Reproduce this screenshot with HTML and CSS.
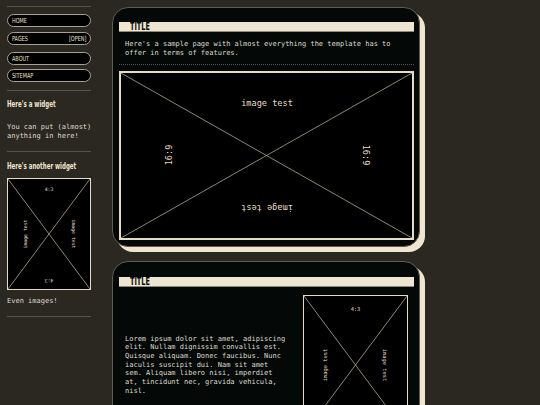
FILE: index.html
```html
<!DOCTYPE html>
<html>
<head>
<meta charset="utf-8">
<link rel="stylesheet" href="styles.css">
</head>
<body>
<div class="page">
  <aside class="sidebar">
    <hr class="rule rule-top">
    <nav class="nav">
      <a class="pill"><span class="cond">HOME</span></a>
      <a class="pill pill-split"><span class="cond">PAGES</span><span class="cond cond-right">[OPEN]</span></a>
      <a class="pill pill-gap"><span class="cond">ABOUT</span></a>
      <a class="pill pill-last"><span class="cond">SITEMAP</span></a>
    </nav>
    <hr class="rule">
    <h3 class="widget-title">Here's a widget</h3>
    <p class="widget-text">You can put (almost) anything in here!</p>
    <hr class="rule">
    <h3 class="widget-title widget-title-2">Here's another widget</h3>
    <div class="ph ph-side">
      <svg class="ph-svg" width="82" height="110" viewBox="0 0 82 110">
        <line x1="0" y1="0" x2="82" y2="110"/>
        <line x1="82" y1="0" x2="0" y2="110"/>
        <text class="t5" x="41" y="10">4:3</text>
        <text class="t5" transform="translate(17 55) rotate(-90)">image test</text>
        <text class="t5" transform="translate(65 55) rotate(90)">image test</text>
        <text class="t5" transform="translate(41 101) rotate(180)">4:3</text>
      </svg>
    </div>
    <p class="widget-text widget-text-2">Even images!</p>
    <hr class="rule">
  </aside>

  <main class="main">
    <section class="card card-first">
      <h2 class="card-title"><span class="title-text">TITLE</span></h2>
      <p class="card-text">Here's a sample page with almost everything the template has to offer in terms of features.</p>
      <hr class="dots">
      <div class="ph ph-wide">
        <svg class="ph-svg" width="291" height="165" viewBox="0 0 291 165">
          <line x1="0" y1="0" x2="291" y2="165"/>
          <line x1="291" y1="0" x2="0" y2="165"/>
          <text class="t9" x="146" y="30">image test</text>
          <text class="t9" transform="translate(48 82) rotate(-90)">16:9</text>
          <text class="t9" transform="translate(245 82) rotate(90)">16:9</text>
          <text class="t9" transform="translate(146 135) rotate(180)">image test</text>
        </svg>
      </div>
    </section>

    <section class="card">
      <h2 class="card-title"><span class="title-text">TITLE</span></h2>
      <div class="split">
        <p class="card-text split-text">Lorem ipsum dolor sit amet, adipiscing elit. Nullam dignissim convallis est. Quisque aliquam. Donec faucibus. Nunc iaculis suscipit dui. Nam sit amet sem. Aliquam libero nisi, imperdiet at, tincidunt nec, gravida vehicula, nisl.</p>
        <div class="ph ph-tall">
          <svg class="ph-svg" width="103" height="138" viewBox="0 0 103 138">
            <line x1="0" y1="0" x2="103" y2="138"/>
            <line x1="103" y1="0" x2="0" y2="138"/>
            <text class="t55" x="51.5" y="13">4:3</text>
            <text class="t55" transform="translate(21 69) rotate(-90)">image test</text>
            <text class="t55" transform="translate(81 69) rotate(90)">image test</text>
            <text class="t55" transform="translate(51.5 126) rotate(180)">4:3</text>
          </svg>
        </div>
      </div>
    </section>
  </main>
</div>
</body>
</html>
```

FILE: styles.css
```css
html, body {
  margin: 0;
  padding: 0;
  background: #2b2721;
  height: 100%;
  overflow: hidden;
}

.page {
  display: flex;
  align-items: flex-start;
  padding-left: 7px;
}

/* ---------- sidebar ---------- */
.sidebar {
  width: 84px;
  flex: none;
  padding-top: 6px;
  color: #e9e0cb;
}

.rule {
  border: 0;
  border-top: 1px solid #58534a;
  margin: 0;
  height: 0;
}

.nav {
  display: flex;
  flex-direction: column;
  margin: 7px 0 8px;
}

.pill {
  display: flex;
  align-items: center;
  box-sizing: border-box;
  height: 13px;
  padding: 0 4px 0 4px;
  border: 1px solid #a9a293;
  border-radius: 7px;
  background: #000;
  color: #e9e0cb;
  font-family: "DejaVu Sans Condensed", "DejaVu Sans", sans-serif;
  font-size: 7px;
  line-height: 8px;
  margin-bottom: 5px;
  white-space: nowrap;
}

.cond {
  display: inline-block;
  transform: scaleX(0.78);
  transform-origin: left center;
}

.cond-right {
  transform-origin: right center;
}

.pill-split {
  justify-content: space-between;
  margin-bottom: 7px;
}

.pill-gap {
  margin-bottom: 4px;
}

.pill-last {
  margin-bottom: 0;
}

.widget-title {
  margin: 8px 0 0;
  font-family: "DejaVu Sans Condensed", "DejaVu Sans", sans-serif;
  font-weight: bold;
  font-size: 8.5px;
  line-height: 10px;
  color: #efe6d1;
  white-space: nowrap;
  transform: scaleX(0.72);
  transform-origin: left center;
}

.widget-title-2 {
  margin-top: 9px;
}

.widget-text {
  margin: 13.5px 0 10.5px;
  width: 90px;
  font-family: "DejaVu Sans Mono", "Liberation Mono", monospace;
  font-size: 7px;
  line-height: 9px;
  color: #dfdbcf;
}

.widget-text-2 {
  margin-top: 6.5px;
}

/* ---------- placeholders ---------- */
.ph {
  box-sizing: content-box;
  background: #000;
  border: 1px solid #e6dcc5;
}

.ph-svg {
  display: block;
}

.ph-svg line {
  stroke: #b2a68e;
  stroke-width: 0.8;
}

.ph-svg text {
  fill: #e6dcc5;
  font-family: "DejaVu Sans Mono", "Liberation Mono", monospace;
  text-anchor: middle;
  dominant-baseline: central;
}

.t5 { font-size: 4.8px; }
.t55 { font-size: 5.4px; }
.t9 { font-size: 8.6px; }

.ph-side {
  width: 82px;
  margin-top: 7px;
}

.ph-wide {
  border-width: 2px;
  width: 291px;
}

.ph-tall {
  flex: none;
  width: 103px;
  margin-right: 6px;
}

/* ---------- main cards ---------- */
.main {
  margin-left: 21px;
  padding-top: 7px;
  display: flex;
  flex-direction: column;
  gap: 14px;
}

.card {
  box-sizing: border-box;
  width: 308px;
  padding: 14px 5px 6px 6px;
  background: #040907;
  border: 1px solid #5f5c54;
  border-radius: 16px;
  box-shadow: 5px 5px 0 #efe6d2;
}

.card + .card {
  padding-top: 15px;
}

.card-title {
  margin: 0;
  box-sizing: border-box;
  height: 10px;
  padding-left: 11px;
  background: #efe6d2;
  border-bottom: 1px solid #8f887a;
  font-family: "DejaVu Sans Condensed", "DejaVu Sans", sans-serif;
  font-weight: bold;
  font-size: 9.8px;
  line-height: 10px;
  color: #0b0b08;
  white-space: nowrap;
}

.title-text {
  display: inline-block;
  transform: scaleX(0.74);
  transform-origin: left center;
}

.card-text {
  margin: 8px 0 0;
  padding: 0 6px;
  font-family: "DejaVu Sans Mono", "Liberation Mono", monospace;
  font-size: 7px;
  line-height: 9px;
  color: #dfdbcf;
}

.dots {
  border: 0;
  border-top: 1px dotted #57564d;
  height: 0;
  margin: 6px 0 6px;
}

.split {
  display: flex;
  align-items: center;
  justify-content: space-between;
  margin-top: 8px;
}

.split-text {
  margin: 0;
  flex: none;
  width: 162px;
  line-height: 8.7px;
}
```
